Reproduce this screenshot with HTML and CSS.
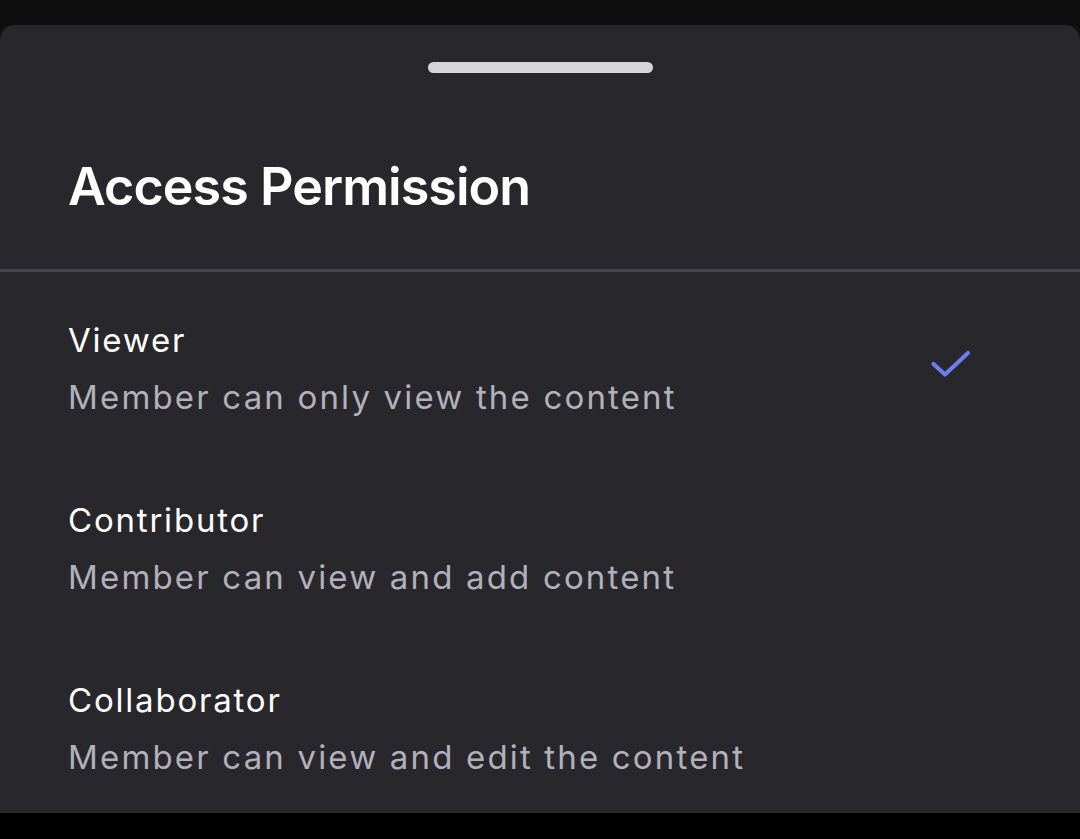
FILE: index.html
```html
<!DOCTYPE html>
<html>

<head>
  <meta charset="utf-8">
  <title>Access Permission</title>
  <link rel="stylesheet" href="styles.css">
</head>

<body>
  <div class="sheet">
    <div class="handle"></div>
    <div class="title">
      <h1>Access Permission</h1>
    </div>
    <ul class="options">
      <li class="option selected">
        <div class="text">
          <div class="name">Viewer</div>
          <div class="desc">Member can only view the content</div>
        </div>
        <svg class="check" width="44" height="30" viewBox="0 0 44 30">
          <path d="M4.5 16L16 26.5L39 5" fill="none" stroke="currentColor" stroke-width="4.2" stroke-linecap="round" stroke-linejoin="round"/>
        </svg>
      </li>
      <li class="option">
        <div class="text">
          <div class="name">Contributor</div>
          <div class="desc">Member can view and add content</div>
        </div>
      </li>
      <li class="option">
        <div class="text">
          <div class="name">Collaborator</div>
          <div class="desc">Member can view and edit the content</div>
        </div>
      </li>
    </ul>
  </div>
  <div class="navbar"></div>
</body>

</html>
```

FILE: styles.css
```css
html,
body {
  height: 100%;
}

body {
  margin: 0;
  padding-top: 25px;
  box-sizing: border-box;
  background: #0f0f0f;
  color: #fff;
  font-family: Inter, "Noto Sans", sans-serif;
  display: flex;
  flex-direction: column;
  overflow: hidden;
}

.sheet {
  flex: 1;
  min-height: 0;
  overflow: hidden;
  background: #28272c;
  border-radius: 15px 15px 0 0;
}

.handle {
  width: 225px;
  height: 11px;
  margin: 37px auto 0;
  border-radius: 6px;
  background: #d6d6d6;
}

.title {
  padding: 0 68px;
  margin-top: 85px;
  border-bottom: 3px solid #45444b;
  padding-bottom: 53px;
}

.title h1 {
  margin: 0;
  font-size: 52px;
  line-height: 58px;
  font-weight: 600;
  letter-spacing: -0.95px;
}

.options {
  list-style: none;
  margin: 0;
  padding: 7px 0 0;
}

.option {
  display: flex;
  align-items: center;
  padding: 41px 107px 42px 68px;
}

.option .text {
  flex: 1;
}

.option .name {
  font-size: 33px;
  line-height: 40px;
  letter-spacing: 1.8px;
}

.option .desc {
  margin-top: 17px;
  font-size: 33px;
  line-height: 40px;
  letter-spacing: 2.17px;
  color: #b2b1bb;
}

.check {
  color: #6a7ef0;
  margin-bottom: 11px;
}

.navbar {
  flex-shrink: 0;
  height: 26px;
  background: #000;
}
```
